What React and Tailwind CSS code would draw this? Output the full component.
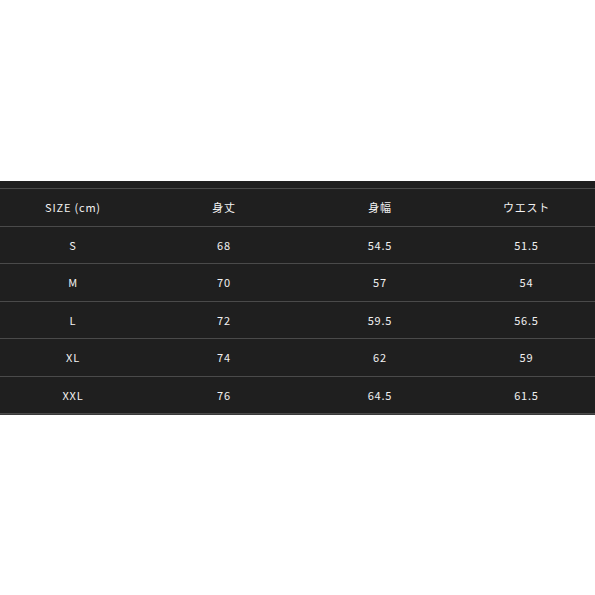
const head = ["SIZE (cm)", "身丈", "身幅", "ウエスト"];

const rows = [
  ["S", "68", "54.5", "51.5"],
  ["M", "70", "57", "54"],
  ["L", "72", "59.5", "56.5"],
  ["XL", "74", "62", "59"],
  ["XXL", "76", "64.5", "61.5"],
];

function Row({ cells }) {
  return (
    <div className="grid grid-cols-[146px_156px_156px_137px] h-[37.5px] items-center border-b border-[#4a4a4a] pt-px">
      {cells.map((c, i) => (
        <div
          key={i}
          className="text-center text-[11px] leading-none text-[#f2f2f2] tracking-[0.8px]"
        >
          {c}
        </div>
      ))}
    </div>
  );
}

export default function App() {
  return (
    <div className="w-[595px] h-[595px] bg-white pt-[181px] font-['Noto_Sans_CJK_JP','DejaVu_Sans',sans-serif]">
      <div className="bg-[#1f1f1f] border-b border-[#3a3a3a]">
        <div className="h-[8px] border-b border-[#4a4a4a]" />
        <Row cells={head} />
        {rows.map((r) => (
          <Row key={r[0]} cells={r} />
        ))}
      </div>
    </div>
  );
}
